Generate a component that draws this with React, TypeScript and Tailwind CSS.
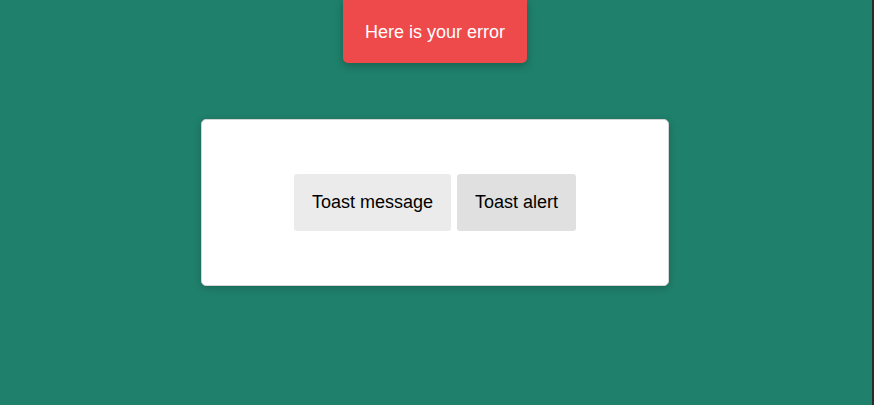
import React from "react";

export default function App() {
  return (
    <div
      className="flex h-[405px] w-[874px] overflow-hidden bg-[#1f806b]"
      style={{ fontFamily: '"Liberation Sans", Arial, sans-serif' }}
    >
      <div className="relative flex flex-1 flex-col items-center">
        {/* toast */}
        <div className="absolute left-[343px] top-0 flex h-[63px] w-[184px] items-center justify-center rounded-b-[5px] bg-[#ef4a4b] pt-[1px] text-[18px] text-white shadow-[0_3px_8px_rgba(0,0,0,0.25)]">
          Here is your error
        </div>

        <div className="mt-[119px] ml-[-2px] flex h-[167px] w-[468px] items-center justify-center gap-[6px] rounded-[5px] border border-[#d4d4d4] bg-white shadow-[0_2px_8px_rgba(0,0,0,0.2)]">
          <button className="h-[57px] w-[157px] rounded-[3px] bg-[#ebebeb] text-[18px] text-black">
            Toast message
          </button>
          <button className="h-[57px] w-[119px] rounded-[3px] bg-[#e0e0e0] text-[18px] text-black">
            Toast alert
          </button>
        </div>
      </div>
      <div className="w-[2px] bg-[#2b2b2b]" />
    </div>
  );
}
